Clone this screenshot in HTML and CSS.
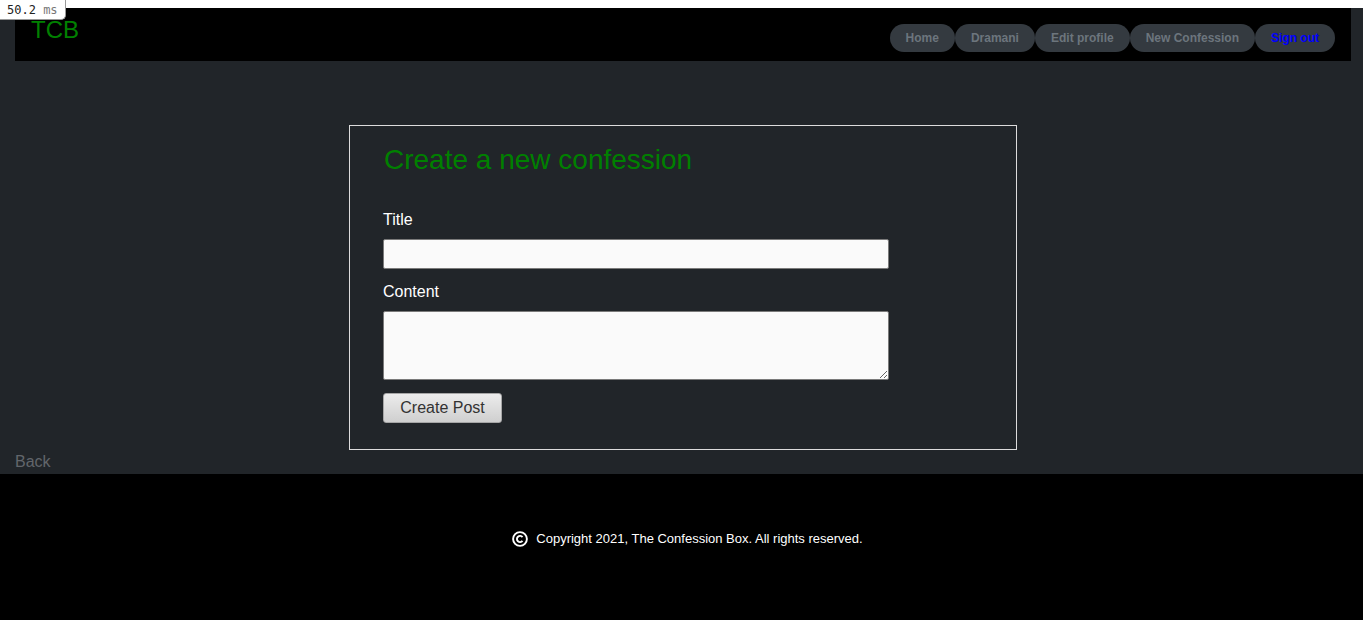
FILE: index.html
```html
<!DOCTYPE html>
<html lang="en">
<head>
<meta charset="utf-8">
<title>TCB - New Confession</title>
<link rel="stylesheet" href="styles.css">
</head>
<body>
<div class="timer"><span class="num">50.2</span> <span class="unit">ms</span></div>
<header class="topbar">
  <a class="logo" href="#">TCB</a>
  <nav class="nav">
    <a class="pill" href="#">Home</a>
    <a class="pill" href="#">Dramani</a>
    <a class="pill" href="#">Edit profile</a>
    <a class="pill" href="#">New Confession</a>
    <a class="pill signout" href="#">Sign out</a>
  </nav>
</header>
<main class="main">
  <form class="card">
    <h2 class="card-title">Create a new confession</h2>
    <label class="label" for="title">Title</label>
    <input class="field" id="title" type="text">
    <label class="label" for="content">Content</label>
    <textarea class="field area" id="content"></textarea>
    <button class="btn" type="button">Create Post</button>
  </form>
  <a class="back" href="#">Back</a>
</main>
<footer class="footer">
  <svg class="copy-icon" width="16" height="16" viewBox="0 0 16 16" aria-hidden="true">
    <circle cx="8" cy="8" r="6.9" fill="none" stroke="#fff" stroke-width="1.9"/>
    <path d="M10.5 6.1 A3.1 3.1 0 1 0 10.5 9.9" fill="none" stroke="#fff" stroke-width="1.9"/>
  </svg>
  <span>Copyright 2021, The Confession Box. All rights reserved.</span>
</footer>
</body>
</html>
```
FILE: styles.css
```css
html {
  background: #ffffff;
}
body {
  margin: 8px 0 0;
  background: #212529;
  font-family: "Liberation Sans", Arial, sans-serif;
  font-size: 16px;
  color: #ffffff;
}
.timer {
  position: absolute;
  top: 0;
  left: 0;
  background: #ffffff;
  border-right: 1px solid #9a9a9a;
  border-bottom: 1px solid #9a9a9a;
  border-bottom-right-radius: 5px;
  padding: 3px 7px 2px 7px;
  font-family: "DejaVu Sans Mono", monospace;
  font-size: 12px;
  line-height: 14px;
  color: #222;
  z-index: 5;
}
.timer .unit {
  color: #777;
}
.topbar {
  display: flex;
  justify-content: space-between;
  align-items: flex-start;
  height: 53px;
  box-sizing: border-box;
  margin: 0 12px 0 15px;
  padding: 0 16px;
  background: #000000;
}
.logo {
  margin-top: 8px;
  color: #008000;
  font-size: 24px;
  line-height: 28px;
  text-decoration: none;
}
.nav {
  display: flex;
  margin-top: 16px;
}
.pill {
  display: block;
  padding: 7px 16px;
  background: #343a40;
  border-radius: 14px;
  color: #6c757d;
  font-size: 12px;
  font-weight: bold;
  line-height: 14px;
  text-decoration: none;
}
.pill.signout {
  color: #0000ff;
}
.main {
  padding-top: 64px;
}
.card {
  display: flex;
  flex-direction: column;
  align-items: flex-start;
  width: 668px;
  box-sizing: border-box;
  margin-left: 349px;
  border: 1px solid #dcdcdc;
  padding: 18px 33px 26px;
}
.card-title {
  margin: 0 0 35px 1px;
  color: #008000;
  font-size: 28px;
  font-weight: normal;
  line-height: 32px;
}
.label {
  display: block;
  color: #ffffff;
  font-size: 16px;
  line-height: 18px;
  margin-bottom: 10px;
}
.field {
  display: block;
  width: 506px;
  height: 30px;
  box-sizing: border-box;
  margin: 0 0 14px;
  background: #fafafa;
  border: 1px solid #7a7a7a;
  border-radius: 2px;
  font-family: "Liberation Sans", Arial, sans-serif;
  font-size: 14px;
}
.area {
  height: 69px;
  margin-bottom: 13px;
  resize: both;
}
.btn {
  width: 119px;
  height: 30px;
  padding: 0;
  border: 1px solid #a6a6a6;
  border-radius: 3px;
  background: linear-gradient(#ececec, #cfcfcf);
  color: #333333;
  font-family: "Liberation Sans", Arial, sans-serif;
  font-size: 16px;
}
.back {
  display: block;
  width: max-content;
  margin: 3px 0 0 15px;
  color: #62666b;
  font-size: 16px;
  line-height: 18px;
  padding-bottom: 3px;
  text-decoration: none;
}
.footer {
  display: flex;
  justify-content: center;
  align-items: flex-start;
  gap: 8px;
  height: 146px;
  box-sizing: border-box;
  padding: 57px 0 0 12px;
  background: #000000;
  color: #ffffff;
  font-size: 13px;
  line-height: 15px;
}
.copy-icon {
  display: block;
  margin-top: 0;
}
```
